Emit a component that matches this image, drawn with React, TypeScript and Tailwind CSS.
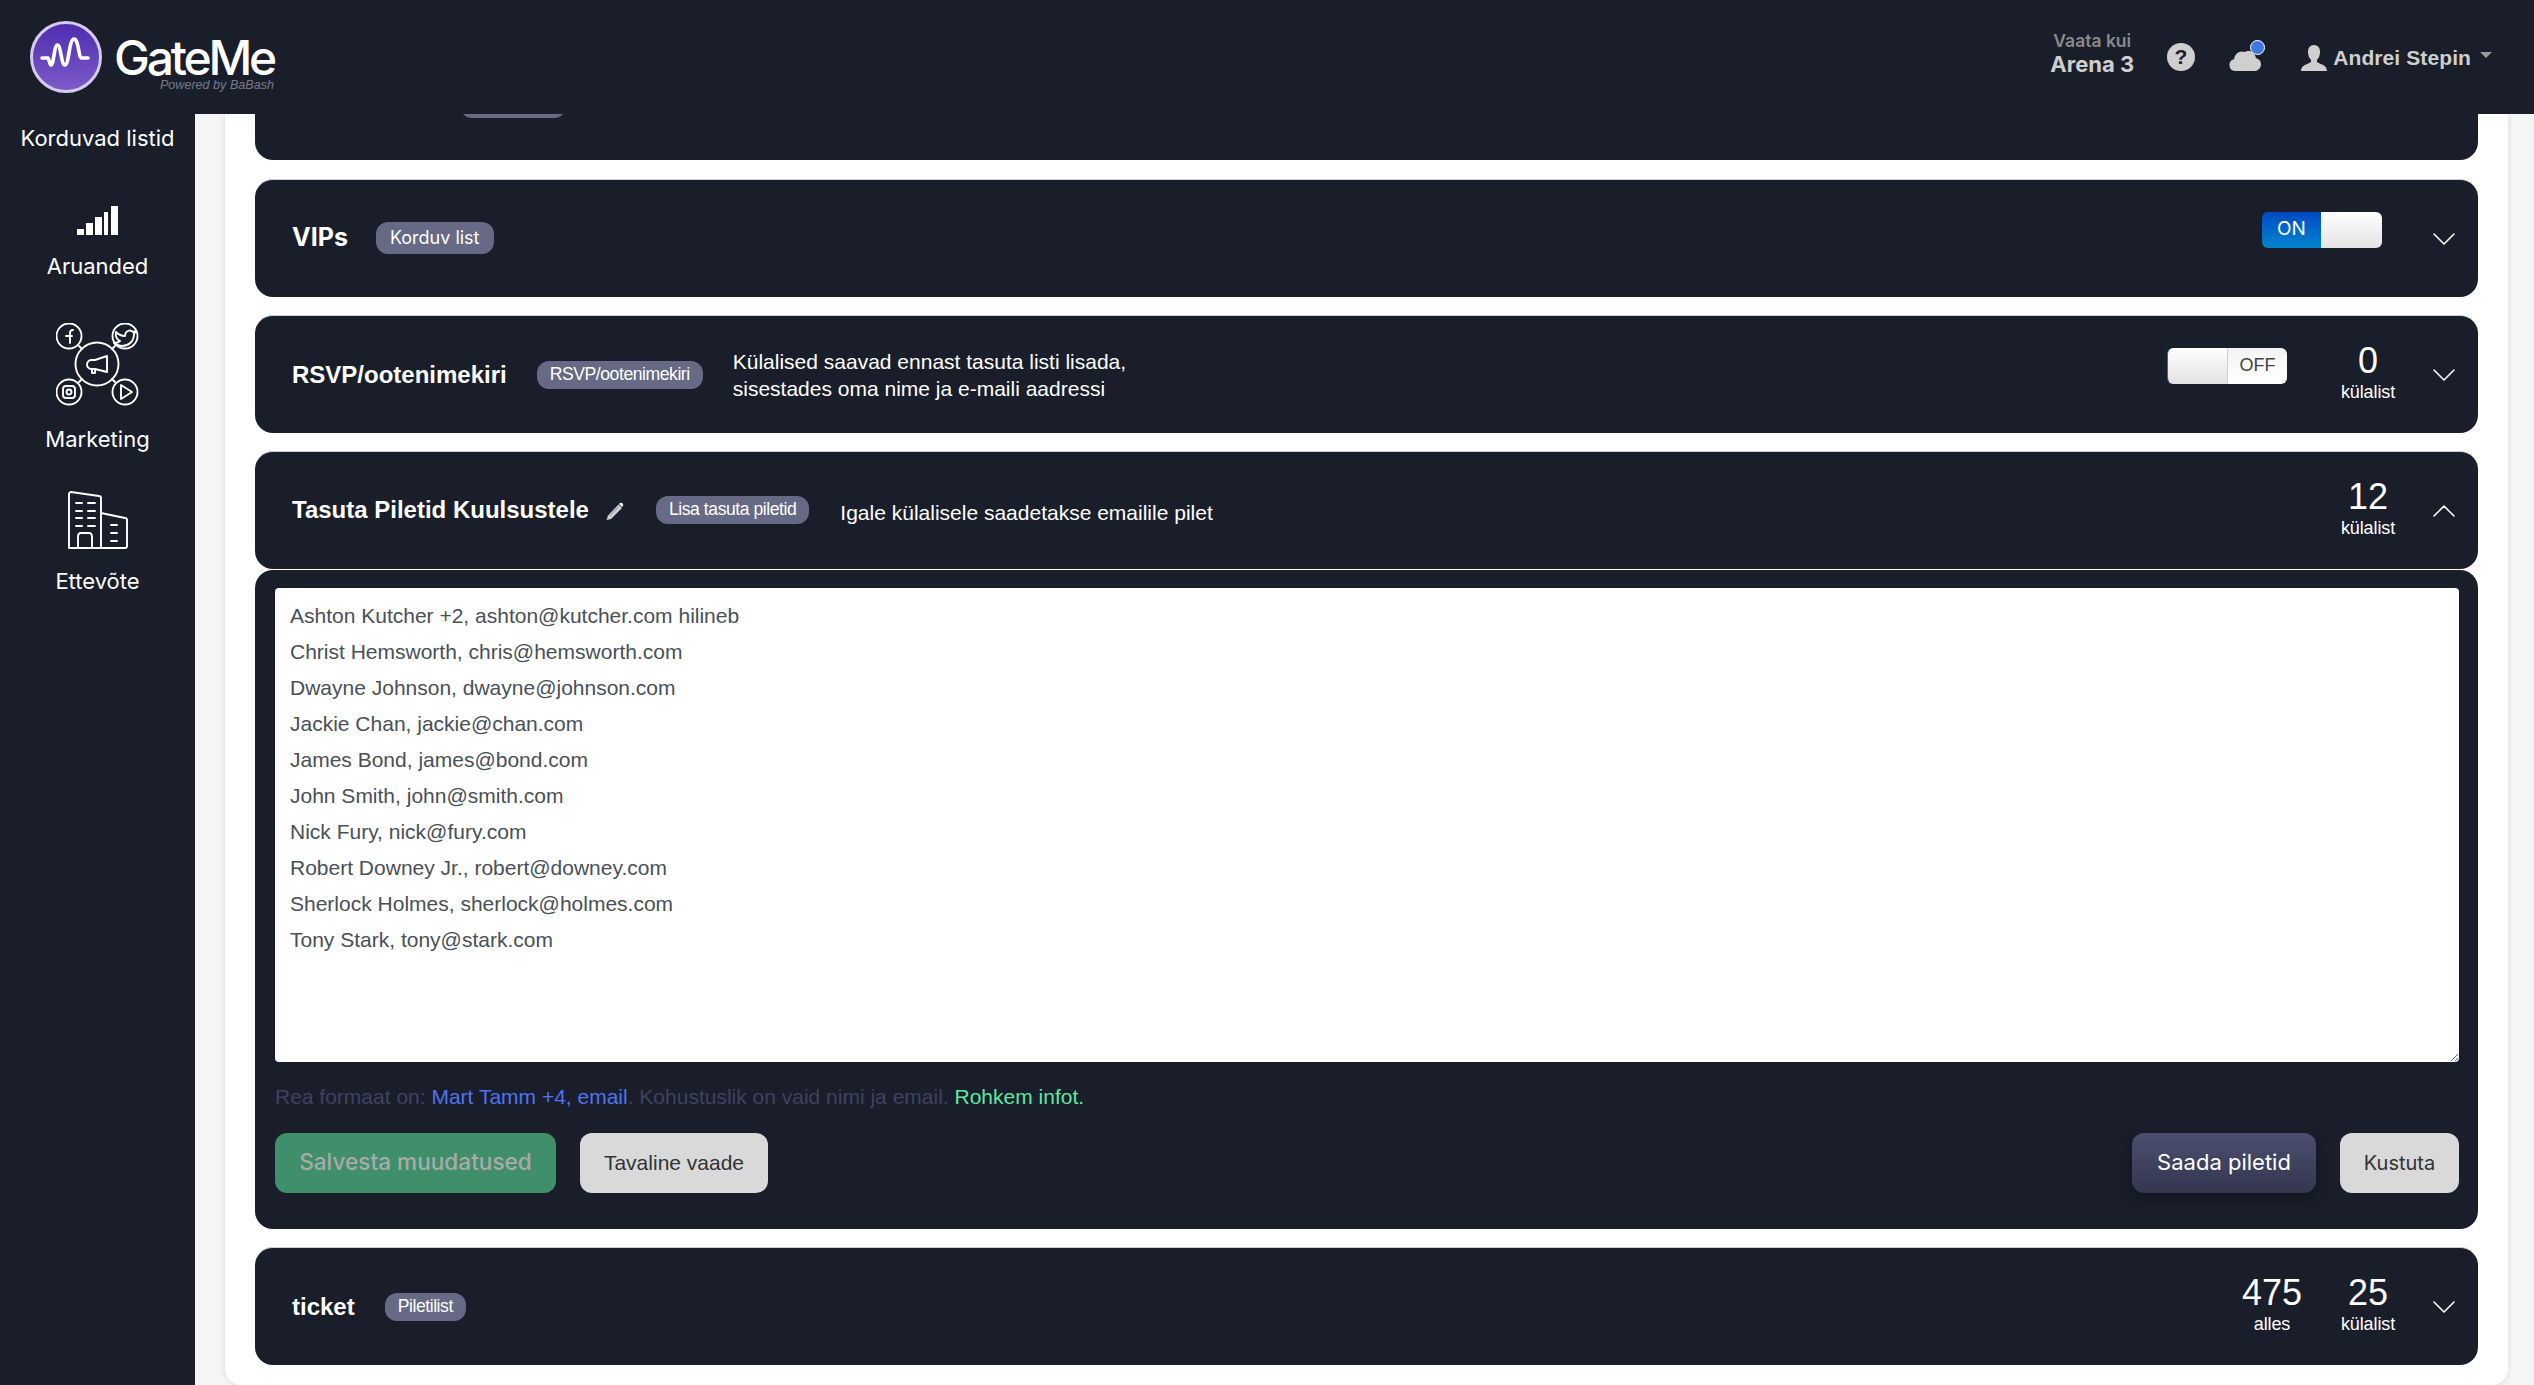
import { ChevronDown, ChevronUp } from "lucide-react";

const guests = [
  "Ashton Kutcher +2, ashton@kutcher.com hilineb",
  "Christ Hemsworth, chris@hemsworth.com",
  "Dwayne Johnson, dwayne@johnson.com",
  "Jackie Chan, jackie@chan.com",
  "James Bond, james@bond.com",
  "John Smith, john@smith.com",
  "Nick Fury, nick@fury.com",
  "Robert Downey Jr., robert@downey.com",
  "Sherlock Holmes, sherlock@holmes.com",
  "Tony Stark, tony@stark.com",
];

const ui = "font-['Inter',sans-serif]";
const arial = "font-['Liberation_Sans',Arial,sans-serif]";

function Logo() {
  return (
    <svg width="74" height="74" viewBox="0 0 74 74" className="shrink-0">
      <defs>
        <linearGradient id="logoFill" x1="0" y1="0" x2="0" y2="1">
          <stop offset="0" stopColor="#4f2bb0" />
          <stop offset="1" stopColor="#7c5cc8" />
        </linearGradient>
      </defs>
      <circle cx="37" cy="37" r="34.5" fill="url(#logoFill)" stroke="#d6cbee" strokeWidth="3" />
      <path
        d="M13 38h6c1 0 1.5 7 3 7 3 0 3-20 6.5-20s3.5 20 7.5 20 4-26 9-26 4 19 8 19h6"
        fill="none"
        stroke="#fff"
        strokeWidth="3.6"
        strokeLinecap="round"
        strokeLinejoin="round"
      />
    </svg>
  );
}

function BarsIcon() {
  return (
    <svg width="42" height="30" viewBox="0 0 42 30" fill="#fff">
      <rect x="0" y="23" width="7" height="6" />
      <rect x="9" y="17" width="7" height="12" />
      <rect x="18" y="11" width="7" height="18" />
      <rect x="27" y="6" width="4" height="23" />
      <rect x="34" y="0" width="7" height="29" />
    </svg>
  );
}

function MarketingIcon() {
  return (
    <svg width="84" height="84" viewBox="0 0 84 84" fill="none" stroke="#fff" strokeWidth="1.9" strokeLinecap="round" strokeLinejoin="round">
      <circle cx="41" cy="41" r="21.5" />
      <circle cx="13" cy="13" r="12.5" />
      <circle cx="69" cy="13" r="12.5" />
      <circle cx="13" cy="69" r="12.5" />
      <circle cx="69" cy="69" r="12.5" />
      <path d="M23 23l3 3M59 23l-3 3M23 59l3-3M59 59l-3-3" />
      <path d="M14 20V10c0-2 1-3 3-3M10 13h6" />
      <path d="M60 9c3 3 6 4 9 4 0-5 5-7 8-4l3-1-2 3c0 8-6 12-12 12-3 0-6-1-8-3 3 0 5-1 6-2-3-1-5-5-4-9z" />
      <rect x="7" y="63" width="12" height="12" rx="3" />
      <circle cx="13" cy="69" r="2.5" />
      <path d="M65 62v14l11-7z" />
      <path d="M51 33v16l-12-3h-4c-2 0-4-2-4-4.5s2-4.5 4-4.5h4zM36 46v4h3v-4" />
    </svg>
  );
}

function BuildingIcon() {
  return (
    <svg width="62" height="60" viewBox="0 0 62 60" fill="none" stroke="#fff" strokeWidth="1.9" strokeLinecap="round" strokeLinejoin="round">
      <path d="M1 57V3c0-1 1-2 2-2l28 4c1 0 2 1 2 2v50M33 22l24 5c1 0 2 1 2 2v26c0 1-1 2-2 2H3c-1 0-2 0-2-1" />
      <path d="M8 12h6M20 12h7M8 20h6M20 20h7M8 27h6M20 27h7M8 35h6M20 35h7M43 34h6M43 42h6M43 50h6" />
      <path d="M10 57V46c0-2 1-4 3-4h8c2 0 3 2 3 4v11" />
    </svg>
  );
}

function Pencil() {
  return (
    <svg width="20" height="20" viewBox="0 0 20 20">
      <path d="M13.5 3.5l3.5 3.5L6 18l-4.5 1L3 14.5z" fill="#cfcfcf" />
      <path d="M14.5 2.5c1-1 2-1 3 0s1 2 0 3l-.5.5L14 3z" fill="#fff" />
      <path d="M5 14.5l8-8" stroke="#8a8a8a" strokeWidth="1" />
    </svg>
  );
}

function SideItem({ label, icon, className }: { label: string; icon?: React.ReactNode; className?: string }) {
  return (
    <div className={`flex flex-col items-center text-white ${className ?? ""}`}>
      {icon}
      <span className={`${ui} text-[22px] leading-[30px] whitespace-nowrap`}>{label}</span>
    </div>
  );
}

function Badge({ text, tight }: { text: string; tight?: boolean }) {
  return (
    <span
      className={`rounded-[12px] bg-[#666a84] text-white flex items-center whitespace-nowrap ${
        tight ? `${arial} h-[28px] px-[13px] text-[17.6px] tracking-[-0.45px]` : `${ui} h-[32px] px-[14px] text-[18px]`
      }`}
    >
      {text}
    </span>
  );
}

function Count({ n, label }: { n: string; label: string }) {
  return (
    <div className={`${arial} mb-[3px] flex w-[70px] flex-col items-center text-white`}>
      <span className="text-[36px] leading-[38px]">{n}</span>
      <span className="text-[18px] leading-[24px] tracking-[-0.1px]">{label}</span>
    </div>
  );
}

function Toggle({ on }: { on: boolean }) {
  if (on) {
    return (
      <div className="flex h-[36px] w-[120px] overflow-hidden rounded-[6px]">
        <div className={`${ui} flex w-[59px] items-center justify-center bg-gradient-to-b from-[#0048c4] to-[#0084cc] text-[19px] text-white`}>ON</div>
        <div className="flex-1 bg-gradient-to-b from-[#ffffff] to-[#e4e4e4]" />
      </div>
    );
  }
  return (
    <div className="flex h-[36px] w-[120px] overflow-hidden rounded-[6px] border-l border-[#1c6fb8]">
      <div className="w-[60px] border-r border-[#cfcfcf] bg-gradient-to-b from-[#ffffff] to-[#e2e2e2]" />
      <div className={`${arial} flex flex-1 items-center justify-center bg-gradient-to-b from-[#f4f4f4] to-[#ffffff] text-[18px] text-[#444]`}>OFF</div>
    </div>
  );
}

function Chevron({ up, className }: { up?: boolean; className?: string }) {
  const Icon = up ? ChevronUp : ChevronDown;
  return <Icon size={40} strokeWidth={0.95} color="#fff" className={className} />;
}

function Row({ children, right }: { children: React.ReactNode; right: React.ReactNode }) {
  return (
    <div className="flex h-[118px] items-center rounded-[18px] border-t border-[#cfcfcf] bg-[#1a1e2b] pl-[37px] pr-[14px]">
      <div className="flex min-w-0 flex-1 items-center">{children}</div>
      {right}
    </div>
  );
}

export default function App() {
  return (
    <div className="flex h-[1385px] w-[2534px] flex-col overflow-hidden bg-[#f5f5f5]">
      <header className="z-10 flex h-[114px] shrink-0 items-center bg-[#1a1e2b] pl-[29px] pr-[42px]">
        <Logo />
        <div className="ml-[11px] mt-[14px] flex flex-col">
          <span className={`${ui} text-[48px] leading-[42px] font-medium tracking-[-3.2px] text-white`}>GateMe</span>
          <span className={`${arial} self-end text-[12.6px] leading-[12px] italic text-[#77798a]`}>Powered by BaBash</span>
        </div>
        <div className="ml-auto flex items-center">
          <div className={`${ui} mb-[6px] flex flex-col items-center text-[#b9b9b9]`}>
            <span className="text-[17.5px] leading-[20px] font-semibold text-[#8a8a8a]">Vaata kui</span>
            <span className="text-[22px] leading-[26px] font-bold text-[#cfcfcf]">Arena 3</span>
          </div>
          <svg width="28" height="28" viewBox="0 0 28 28" className="ml-[33px]">
            <circle cx="14" cy="14" r="14" fill="#cfcfcf" />
            <text x="14" y="21" textAnchor="middle" fontSize="21" fontWeight="700" fill="#1a1e2b" fontFamily="Liberation Sans">?</text>
          </svg>
          <div className="relative ml-[34px] h-[28px] w-[34px]">
            <svg width="32" height="24" viewBox="0 0 32 24" className="absolute bottom-0 left-0">
              <path d="M6 24a6 6 0 0 1-1-11.8C6 6 11 3 16 5c2-2 9-2 11 6 3 1 5 3 5 6 0 4-3 7-6 7z" fill="#cfcfcf" />
            </svg>
            <span className="absolute -right-[2px] -top-[3px] h-[15px] w-[15px] rounded-full border border-white bg-[#3f78de]" />
          </div>
          <svg width="26" height="26" viewBox="0 0 26 26" className="ml-[38px] mt-[2px]" fill="#cfcfcf">
            <path d="M13 0c4 0 6 3 6 7 0 3-1 6-3 8v2c3 2 10 3 10 9H0c0-6 7-7 10-9v-2c-2-2-3-5-3-8 0-4 2-7 6-7z" />
          </svg>
          <span className={`${arial} ml-[6px] mt-[2px] text-[21px] font-bold tracking-[0.1px] text-[#cfcfcf]`}>Andrei Stepin</span>
          <span className="ml-[9px] mb-[4px] h-0 w-0 border-x-[6px] border-t-[6px] border-x-transparent border-t-[#9a9a9a]" />
        </div>
      </header>

      <div className="flex min-h-0 flex-1">
        <aside className="flex w-[195px] shrink-0 flex-col items-center bg-[#1a1e2b] pt-[9px]">
          <SideItem label="Korduvad listid" />
          <SideItem label="Aruanded" className="mt-[53px]" icon={<div className="mb-[15px]"><BarsIcon /></div>} />
          <SideItem label="Marketing" className="mt-[42px]" icon={<div className="mb-[17px]"><MarketingIcon /></div>} />
          <SideItem label="Ettevõte" className="mt-[37px]" icon={<div className="mb-[15px] ml-[3px]"><BuildingIcon /></div>} />
        </aside>

        <main className="ml-[30px] mr-[26px] min-w-0 flex-1 rounded-b-[16px] bg-white px-[30px] shadow-[0_0_6px_rgba(0,0,0,0.12)]">
          <div className="-mt-[72px] flex flex-col">
            <Row right={null}>
              <div className="ml-[168px] h-[32px] w-[106px] rounded-[12px] bg-[#666a84]" />
            </Row>
            <div className="mt-[19px]">
              <Row
                right={
                  <div className="flex items-center">
                    <div className="mb-[18px]"><Toggle on /></div>
                    <Chevron className="ml-[42px]" />
                  </div>
                }
              >
                <span className={`${ui} mb-[2px] text-[25px] font-bold text-white`}>VIPs</span>
                <div className="mb-[2px] ml-[28px]"><Badge text="Korduv list" /></div>
              </Row>
            </div>
            <div className="mt-[18px]">
              <Row
                right={
                  <div className="flex items-center">
                    <div className="mb-[18px]"><Toggle on={false} /></div>
                    <div className="ml-[46px]"><Count n="0" label="külalist" /></div>
                    <Chevron className="ml-[21px]" />
                  </div>
                }
              >
                <span className={`${arial} text-[24px] font-bold text-white`}>RSVP/ootenimekiri</span>
                <div className="ml-[30px]"><Badge text="RSVP/ootenimekiri" tight /></div>
                <p className={`${arial} ml-[30px] text-[21px] leading-[27px] text-white`}>
                  Külalised saavad ennast tasuta listi lisada,
                  <br />
                  sisestades oma nime ja e-maili aadressi
                </p>
              </Row>
            </div>
            <div className="mt-[18px]">
              <Row
                right={
                  <div className="flex items-center">
                    <Count n="12" label="külalist" />
                    <Chevron up className="ml-[21px]" />
                  </div>
                }
              >
                <span className={`${arial} mb-[2px] text-[24px] font-bold text-white`}>Tasuta Piletid Kuulsustele</span>
                <div className="ml-[16px]"><Pencil /></div>
                <div className="mb-[2px] ml-[31px]"><Badge text="Lisa tasuta piletid" tight /></div>
                <p className={`${arial} ml-[31px] mt-[4px] text-[21px] text-white`}>Igale külalisele saadetakse emailile pilet</p>
              </Row>
            </div>

            <div className="mt-[1px] h-[659px] rounded-[18px] bg-[#1a1e2b] pl-[20px] pr-[19px] pt-[18px]">
              <textarea
                readOnly
                defaultValue={guests.join("\n")}
                className={`${arial} block h-[474px] w-full resize-y rounded-[4px] bg-white px-[15px] py-[10px] text-[21px] leading-[36px] text-[#495057] outline-none`}
              />
              <p className={`${arial} mt-[21px] text-[21px] leading-[28px] text-[#3f4260]`}>
                Rea formaat on: <span className="text-[#4f74ee]">Mart Tamm +4, email</span>. Kohustuslik on vaid nimi ja email.{" "}
                <span className="text-[#5ee8a2]">Rohkem infot.</span>
              </p>
              <div className="mt-[22px] flex">
                <button className={`${ui} h-[60px] w-[281px] rounded-[12px] bg-[#3f8f6b] pb-[2px] text-[22.6px] font-medium text-[#a9aaaa]`}>Salvesta muudatused</button>
                <button className={`${arial} ml-[24px] h-[60px] w-[188px] rounded-[12px] bg-[#d9d9d9] text-[21px] text-[#333]`}>Tavaline vaade</button>
                <button className={`${ui} ml-auto h-[60px] w-[184px] rounded-[12px] bg-gradient-to-b from-[#4c506e] to-[#32364f] pb-[2px] text-[22px] text-white shadow-[0_6px_14px_rgba(0,0,0,0.3)]`}>Saada piletid</button>
                <button className={`${ui} ml-[24px] h-[60px] w-[119px] rounded-[12px] bg-[#d9d9d9] text-[20px] text-[#333]`}>Kustuta</button>
              </div>
            </div>

            <div className="mt-[18px]">
              <Row
                right={
                  <div className="flex items-center">
                    <Count n="475" label="alles" />
                    <div className="ml-[26px]"><Count n="25" label="külalist" /></div>
                    <Chevron className="ml-[21px]" />
                  </div>
                }
              >
                <span className={`${arial} text-[24px] font-bold text-white`}>ticket</span>
                <div className="ml-[30px]"><Badge text="Piletilist" tight /></div>
              </Row>
            </div>
          </div>
        </main>
      </div>
    </div>
  );
}
